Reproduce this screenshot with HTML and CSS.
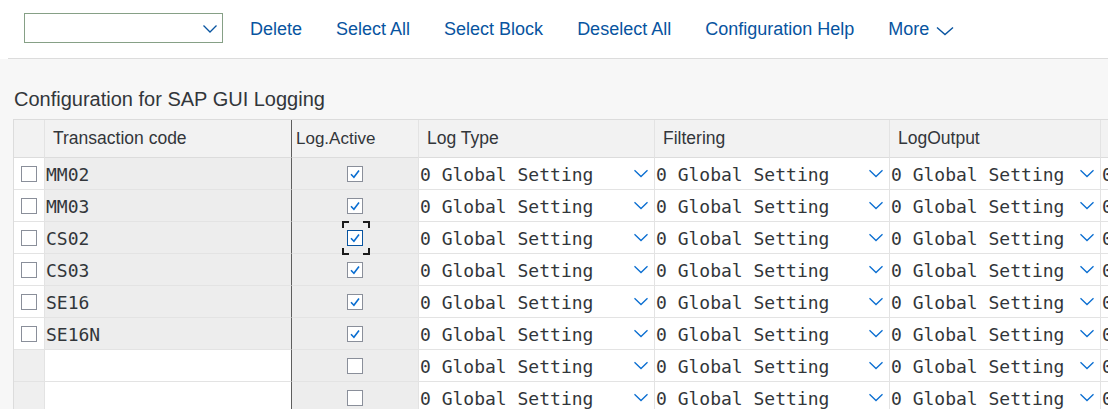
FILE: index.html
```html
<!DOCTYPE html>
<html>
<head>
<meta charset="utf-8">
<link rel="stylesheet" href="styles.css">
</head>
<body>
<div class="toolbar">
  <div class="toolbar-inner">
    <div class="combo">
      <svg class="combo-chev" width="16" height="10" viewBox="0 0 16 10"><path d="M1.5 1.5 L8 8 L14.5 1.5" fill="none" stroke="#0854a0" stroke-width="1.3"/></svg>
    </div>
    <span class="tb-btn">Delete</span>
    <span class="tb-btn">Select All</span>
    <span class="tb-btn">Select Block</span>
    <span class="tb-btn">Deselect All</span>
    <span class="tb-btn">Configuration Help</span>
    <span class="tb-btn tb-more">More
      <svg width="18" height="10" viewBox="0 0 18 10"><path d="M1 1.5 L9 8.5 L17 1.5" fill="none" stroke="#0854a0" stroke-width="1.4"/></svg>
    </span>
  </div>
</div>
<main class="content">
  <h1 class="title">Configuration for SAP GUI Logging</h1>
  <div class="table">
    <div class="row head">
      <div class="cell sel"></div>
      <div class="cell tc">Transaction code</div>
      <div class="cell act">Log.Active</div>
      <div class="cell dd-h">Log Type</div>
      <div class="cell dd-h">Filtering</div>
      <div class="cell dd-h">LogOutput</div>
      <div class="cell dd-h last"></div>
    </div>
    <div id="rows"></div>
  </div>
</main>
<script src="app.js"></script>
</body>
</html>
```
FILE: app.js
```js
const codes = ["MM02","MM03","CS02","CS03","SE16","SE16N","",""];
const chk = '<svg width="16" height="16" viewBox="0 0 16 16"><path d="M4 8.3 L6.9 11.2 L12 4.6" fill="none" stroke="#0a6ed1" stroke-width="1.6"/></svg>';
const chev = '<svg class="chev" width="16" height="9" viewBox="0 0 16 9"><path d="M1.5 1.2 L8 7.5 L14.5 1.2" fill="none" stroke="#0a6ed1" stroke-width="1.3"/></svg>';
const dd = '<div class="cell dd"><span class="mono">0 Global Setting</span>' + chev + '</div>';
const ddLast = '<div class="cell dd last"><span class="mono">0</span></div>';
let html = "";
codes.forEach((c, i) => {
  const filled = c !== "";
  const focus = i === 2 ? '<span class="focus"><i class="tl"></i><i class="tr"></i><i class="bl"></i><i class="br"></i></span>' : '';
  html += '<div class="row' + (filled ? ' filled' : ' empty') + '">' +
    '<div class="cell sel">' + (filled ? '<span class="cb"></span>' : '') + '</div>' +
    '<div class="cell tc"><span class="mono">' + c + '</span></div>' +
    '<div class="cell act"><span class="cbwrap"><span class="cb' + (i === 2 ? ' focused' : '') + '">' + (filled ? chk : '') + '</span>' + focus + '</span></div>' +
    dd + dd + dd + ddLast +
    '</div>';
});
document.getElementById("rows").innerHTML = html;
```
FILE: styles.css
```css
html, body {
  margin: 0;
  padding: 0;
}
body {
  background: #f7f7f7;
  font-family: "Liberation Sans", Arial, sans-serif;
  color: #32363a;
  overflow: hidden;
  width: 1108px;
  height: 409px;
}
.toolbar {
  background: #ffffff;
}
.toolbar-inner {
  margin-left: 8px;
  height: 58px;
  border-bottom: 1px solid #dcdcdc;
  display: flex;
  align-items: center;
  padding-left: 16px;
  gap: 34px;
}
.combo {
  width: 193px;
  height: 28px;
  border: 1px solid #86a086;
  background: #fff;
  display: flex;
  align-items: center;
  justify-content: flex-end;
  padding-right: 4px;
  margin-right: -7px;
  box-sizing: content-box;
  margin-top: -2px;
}
.combo-chev {
  margin-top: 1px;
}
.tb-btn {
  font-size: 18px;
  color: #0854a0;
  white-space: nowrap;
}
.tb-more {
  display: flex;
  align-items: center;
  gap: 7px;
}
.tb-more svg {
  margin-top: 3px;
}
.content {
  padding: 28px 0 0 13px;
}
.title {
  margin: 0;
  font-size: 20px;
  font-weight: normal;
  line-height: 24px;
  height: 24px;
  color: #32363a;
  padding-left: 1px;
}
.table {
  margin-top: 8px;
  border-top: 1px solid #dcdcdc;
  border-left: 1px solid #dcdcdc;
  width: 1095px;
  overflow: visible;
}
.row {
  display: grid;
  grid-template-columns: 31px 247px 127px 236px 235px 211px 8px;
  height: 32px;
}
.row.head {
  height: 38px;
}
.cell {
  box-sizing: border-box;
  border-right: 1px solid #e3e3e3;
  border-bottom: 1px solid #e3e3e3;
  display: flex;
  align-items: center;
  overflow: hidden;
  white-space: nowrap;
}
.cell.last {
  border-right: 0;
}
.cell.tc {
  border-right: 1px solid #5e5e5e;
  padding-left: 1px;
}
.filled .cell.tc {
  background: #ededed;
}
.empty .cell.tc {
  background: #ffffff;
}
.cell.sel {
  justify-content: center;
}
.filled .cell.sel {
  background: #ffffff;
}
.empty .cell.sel {
  background: #efefef;
}
.cell.act {
  background: #ededed;
  justify-content: center;
  overflow: visible;
}
.cell.dd {
  background: #ffffff;
  padding-left: 1px;
  justify-content: space-between;
}
.head .cell {
  background: #f2f2f2;
  font-size: 17.5px;
  color: #32363a;
  padding-left: 8px;
  border-bottom-color: #dcdcdc;
  justify-content: flex-start;
  overflow: hidden;
}
.head .cell.sel {
  padding-left: 0;
}
.head .cell.act {
  padding-left: 4px;
  font-size: 17px;
}
.head .cell.tc {
  padding-left: 8px;
}
.chev {
  margin-right: 5px;
  flex: none;
}
.mono {
  font-family: "DejaVu Sans Mono", "Liberation Mono", monospace;
  font-size: 18px;
  color: #32363a;
  padding-top: 2px;
}
.cb {
  width: 16px;
  height: 16px;
  box-sizing: border-box;
  border: 1px solid #8a8f9a;
  background: #ffffff;
  display: block;
  position: relative;
}
.cb svg {
  position: absolute;
  left: -1px;
  top: -1px;
}
.cb.focused {
  border-color: #0854a0;
}
.cbwrap {
  position: relative;
  display: block;
}
.focus {
  position: absolute;
  left: -5px;
  right: -7px;
  top: -9px;
  bottom: -9px;
  z-index: 2;
}
.focus i {
  position: absolute;
  width: 5px;
  height: 5px;
  border: 0 solid #1a1a1a;
}
.focus .tl { left: 0; top: 0; border-left-width: 2px; border-top-width: 2px; }
.focus .tr { right: 0; top: 0; border-right-width: 2px; border-top-width: 2px; }
.focus .bl { left: 0; bottom: 0; border-left-width: 2px; border-bottom-width: 2px; }
.focus .br { right: 0; bottom: 0; border-right-width: 2px; border-bottom-width: 2px; }
```
